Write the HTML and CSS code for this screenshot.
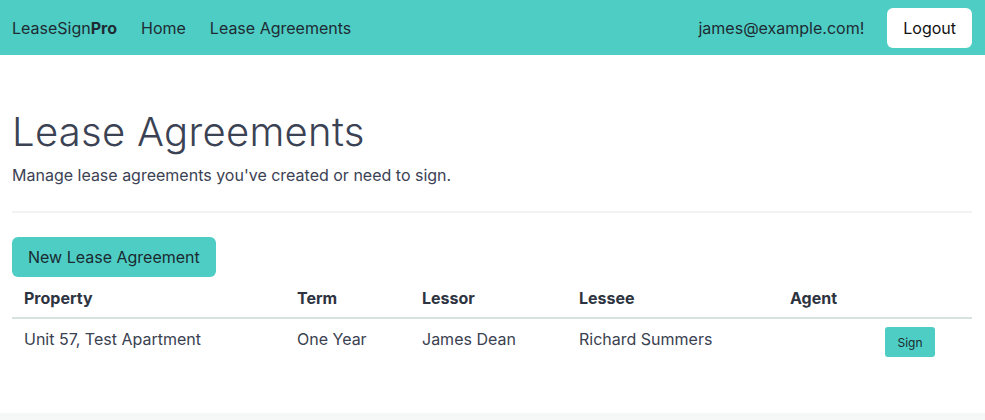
FILE: index.html
```html
<!DOCTYPE html>
<html>
<head>
<meta charset="utf-8">
<link rel="stylesheet" href="styles.css">
</head>
<body>
<nav class="navbar">
  <div class="nav-left">
    <a class="brand">LeaseSign<b>Pro</b></a>
    <a class="nav-link">Home</a>
    <a class="nav-link">Lease Agreements</a>
  </div>
  <div class="nav-right">
    <span class="user">james@example.com!</span>
    <button class="btn-logout">Logout</button>
  </div>
</nav>
<main class="container">
  <h1 class="title">Lease Agreements</h1>
  <p class="lead">Manage lease agreements you've created or need to sign.</p>
  <hr class="divider">
  <button class="btn-primary">New Lease Agreement</button>
  <table class="table">
    <thead>
      <tr>
        <th class="c1">Property</th>
        <th class="c2">Term</th>
        <th class="c3">Lessor</th>
        <th class="c4">Lessee</th>
        <th class="c5">Agent</th>
        <th class="c6"></th>
      </tr>
    </thead>
    <tbody>
      <tr>
        <td>Unit 57, Test Apartment</td>
        <td>One Year</td>
        <td>James Dean</td>
        <td>Richard Summers</td>
        <td></td>
        <td><button class="btn-sign">Sign</button></td>
      </tr>
    </tbody>
  </table>
</main>
<footer class="footer"></footer>
</body>
</html>
```
FILE: styles.css
```css
* { box-sizing: border-box; }
html, body { margin: 0; padding: 0; }
body {
  font-family: Inter, "Noto Sans", sans-serif;
  font-size: 16px;
  color: #3a4150;
  background: #fff;
}
.navbar {
  height: 55px;
  background: #4ecdc4;
  display: flex;
  align-items: center;
  justify-content: space-between;
  padding: 0 13px 0 12px;
  color: #1e2b33;
}
.nav-left, .nav-right { display: flex; align-items: center; }
.brand { font-size: 16px; margin-right: 24px; }
.brand b { font-weight: 700; }
.nav-link { font-size: 16px; margin-right: 24px; }
.user { font-size: 16px; margin-right: 23px; }
.btn-logout {
  font-family: inherit;
  font-size: 16px;
  background: #fff;
  color: #111;
  border: none;
  border-radius: 6px;
  height: 40px;
  padding: 0 16px;
}
.container {
  padding: 53px 13px 0 12px;
  height: 358px;
}
.title {
  margin: 0;
  font-size: 40px;
  font-weight: 300;
  line-height: 48px;
  letter-spacing: 0.3px;
  color: #3b4254;
}
.lead { margin: 7px 0 0; line-height: 24px; color: #3b4254; }
.divider {
  margin: 24px 0 24px;
  border: none;
  border-top: 2px solid #f1f3f4;
}
.btn-primary {
  font-family: inherit;
  font-size: 16px;
  background: #4ecdc4;
  color: #1a2a30;
  border: none;
  border-radius: 6px;
  height: 40px;
  padding: 0 16px;
  display: block;
}
.table { width: 100%; border-collapse: collapse; margin-top: 0; }
.table th {
  text-align: left;
  font-weight: 700;
  line-height: 20px;
  padding: 11px 12px 9px;
  color: #2d3340;
  border-bottom: 2px solid #d6e2df;
}
.table td { padding: 10px 12px; line-height: 20px; color: #3a4150; vertical-align: top; }
.c1 { width: 273px; }
.c2 { width: 125px; }
.c3 { width: 157px; }
.c4 { width: 211px; }
.c5 { width: 95px; }
.btn-sign {
  font-family: inherit;
  font-size: 12px;
  background: #4ecdc4;
  color: #1a2a30;
  border: none;
  border-radius: 3px;
  height: 30px;
  width: 50px;
  margin-top: -2px;
  display: block;
}
.footer { height: 7px; background: #f6f7f7; }
```
